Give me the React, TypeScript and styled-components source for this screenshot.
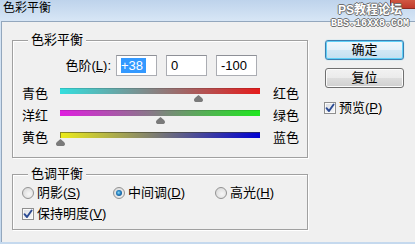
import React from 'react';
import styled, { createGlobalStyle, css } from 'styled-components';

const GlobalStyle = createGlobalStyle`
  html, body { margin: 0; padding: 0; }
  body {
    width: 415px; height: 244px; overflow: hidden;
    font-family: "Liberation Sans", "Noto Sans CJK SC", sans-serif;
    font-size: 13px; color: #000;
    background: #c9dcf0;
  }
`;

const Window = styled.div`
  position: relative;
  width: 415px; height: 244px;
  display: flex; flex-direction: column;
  overflow: hidden;
  background: linear-gradient(180deg, #bed3eb 0px, #d6e5f5 20px, #c5d9ee 100%);
`;

const TitleBar = styled.div`
  flex: none;
  height: 21px;
  box-sizing: border-box;
  padding: 1px 0 0 3px;
  font-size: 12px;
  line-height: 14px;
`;

const Watermark = styled.div`
  position: absolute;
  top: 3px; right: 6px;
  display: flex; flex-direction: column; align-items: flex-end;
  color: #fff;
  text-shadow: 1px 0 #6d6d6d, -1px 0 #6d6d6d, 0 1px #6d6d6d, 0 -1px #6d6d6d;
  pointer-events: none;
`;

const MarkTitle = styled.span`
  font-size: 12px; line-height: 15px; font-weight: bold; margin-right: 7px;
`;

const MarkUrl = styled.span`
  font-family: "Liberation Mono", monospace;
  font-size: 10px; line-height: 11px; font-weight: bold;
`;

const CloseButton = styled.div`
  position: absolute;
  top: -12px; right: -10px;
  width: 33px; height: 19px;
  border: 1px solid #8b2b22;
  border-radius: 0 0 4px 4px;
  background: linear-gradient(180deg, #e8a090 0%, #d25a44 55%, #c0392b 100%);
`;

const Body = styled.div`
  flex: none;
  height: 221px;
  margin-left: 1px;
  box-sizing: border-box;
  background: #f0f0f0;
  border-top: 1px solid #93a7bd;
  border-left: 1px solid #93a7bd;
  padding: 11px 0 0 10px;
  display: flex;
  align-items: flex-start;
  gap: 17px;
`;

const LeftCol = styled.div`
  flex: none;
  width: 296px;
  display: flex; flex-direction: column;
`;

const Group = styled.fieldset<{ $gap?: number }>`
  margin: ${p => p.$gap ?? 0}px 0 0 0;
  padding: 0 9px ${p => (p.$gap ? 7 : 5)}px 9px;
  min-width: 0;
  width: 296px;
  box-sizing: border-box;
  border: 1px solid #a0a0a0;
  box-shadow: inset 1px 1px 0 #fff, 1px 1px 0 #fff;
`;

const Legend = styled.legend`
  margin-left: 6px;
  padding: 0 3px;
  font-size: 13px;
  line-height: 14px;
  background: #f0f0f0;
`;

const LevelRow = styled.div`
  display: flex; align-items: center;
  margin-top: 8px;
  height: 21px;
`;

const LevelLabel = styled.span`
  flex: none;
  width: 89px; margin-right: 5px;
  text-align: right; line-height: 16px;
`;

const NumField = styled.div`
  flex: none;
  width: 41px; height: 21px;
  box-sizing: border-box;
  margin-right: 9px;
  border: 1px solid #abadb3;
  border-top-color: #8e9097;
  background: #fff;
  padding-left: 4px;
  line-height: 19px;
  font-size: 13px;
`;

const Selected = styled.span`
  background: #3399ff; color: #fff;
  padding: 0 3px 0 0;
`;

const Sliders = styled.div`
  margin-top: 10px;
  display: flex; flex-direction: column;
`;

const SliderRow = styled.div`
  display: flex; align-items: flex-start;
  height: 22px;
`;

const SideLabel = styled.span<{ $right?: boolean }>`
  flex: none;
  width: 38px;
  line-height: 16px;
  white-space: nowrap;
  ${p => p.$right && css`margin-left: 13px; width: auto;`}
`;

const Track = styled.div<{ $from: string; $to: string; $focus?: boolean }>`
  position: relative;
  flex: none;
  width: 200px; height: 6px;
  margin-top: 2px;
  background: linear-gradient(90deg, ${p => p.$from}, ${p => p.$to});
  box-shadow: inset 0 1px 0 rgba(0,0,0,0.12);
  ${p => p.$focus && css`box-shadow: inset 1px 1px 0 rgba(60,60,40,0.55);`}
`;

const Thumb = styled.svg`
  position: absolute;
  top: 7px;
  width: 9px; height: 7px;
  margin-left: -4.5px;
  overflow: visible;
`;

const RadioRow = styled.div`
  margin-top: 4px;
  display: grid;
  grid-template-columns: 91px 102px auto;
  height: 16px;
`;

const Option = styled.label`
  display: flex; align-items: center; gap: 3px;
  line-height: 16px;
  white-space: nowrap;
`;

const Radio = styled.span<{ $on?: boolean }>`
  position: relative;
  flex: none;
  width: 12px; height: 12px;
  box-sizing: border-box;
  border-radius: 50%;
  border: 1px solid #929292;
  background: radial-gradient(circle at 60% 60%, #f7f7f7 0%, #dedede 70%, #cfcfcf 100%);
  ${p => p.$on && css`
    &::after {
      content: "";
      position: absolute;
      left: 2px; top: 2px;
      width: 6px; height: 6px;
      border-radius: 50%;
      background: radial-gradient(circle at 45% 45%, #8fdcf6 0%, #2a86c4 40%, #0f4f8c 80%);
    }
  `}
`;

const CheckRow = styled.div`
  margin-top: 5px;
  height: 16px;
  display: flex;
`;

const Box = styled.span`
  flex: none;
  width: 12px; height: 12px;
  box-sizing: border-box;
  border: 1px solid #8f8f8f;
  background: linear-gradient(135deg, #dadde2 0%, #f6f7f9 100%);
  box-shadow: inset 0 0 0 1px #fafafa;
  display: flex; align-items: center; justify-content: center;
`;

const RightCol = styled.div`
  flex: none;
  padding-top: 7px;
  display: flex; flex-direction: column;
`;

const Button = styled.button<{ $default?: boolean }>`
  width: 79px; height: 20px;
  box-sizing: border-box;
  margin: 0 0 8px 0;
  padding: 0;
  font: 13px/18px "Liberation Sans", "Noto Sans CJK SC", sans-serif;
  color: #000;
  border: 1px solid #707070;
  border-radius: 3px;
  background: linear-gradient(180deg, #f2f2f2 0%, #ebebeb 48%, #dddddd 52%, #cfcfcf 100%);
  box-shadow: inset 0 0 0 1px #fbfbfb;
  ${p => p.$default && css`
    border-color: #3c7fb1;
    background: linear-gradient(180deg, #f1f8fc 0%, #e4f1f9 48%, #d2e8f5 52%, #c3e0f1 100%);
    box-shadow: inset 0 0 0 1px #5fd0f7, 0 0 1px #5fc6ef;
  `}
`;

const PreviewRow = styled.div`
  margin-top: 4px;
  margin-left: -1px;
  height: 16px;
  display: flex;
`;

function Check() {
  return (
    <svg width="10" height="10" viewBox="0 0 10 10">
      <path d="M1.5 5.2 L4 8 L8.6 1.5" fill="none" stroke="#2a4a93" strokeWidth="1.9" strokeLinecap="round" strokeLinejoin="round" />
    </svg>
  );
}

const sliders = [
  { left: '青色', right: '红色', from: '#33dede', to: '#e51c1c', value: 38 },
  { left: '洋红', right: '绿色', from: '#e01de0', to: '#1fe81f', value: 0 },
  { left: '黄色', right: '蓝色', from: '#ecec1a', to: '#0000d2', value: -100, focus: true },
];

export default function App() {
  return (
    <>
      <GlobalStyle />
      <Window>
        <TitleBar>色彩平衡</TitleBar>
        <CloseButton />
        <Watermark>
          <MarkTitle>PS教程论坛</MarkTitle>
          <MarkUrl>BBS.16XX8.COM</MarkUrl>
        </Watermark>
        <Body>
          <LeftCol>
            <Group>
              <Legend>色彩平衡</Legend>
              <LevelRow>
                <LevelLabel>色阶(<u>L</u>):</LevelLabel>
                <NumField><Selected>+38</Selected></NumField>
                <NumField>0</NumField>
                <NumField>-100</NumField>
              </LevelRow>
              <Sliders>
                {sliders.map(s => (
                  <SliderRow key={s.left}>
                    <SideLabel>{s.left}</SideLabel>
                    <Track $from={s.from} $to={s.to} $focus={s.focus}>
                      <Thumb viewBox="0 0 9 7" style={{ left: `${(s.value + 100) / 2}%` }}>
                        <path d="M4.5 0 C5.8 1.4 9 3 9 5 C9 6.4 8 7 6.6 7 L2.4 7 C1 7 0 6.4 0 5 C0 3 3.2 1.4 4.5 0 Z" fill="#7a7a7a" />
                      </Thumb>
                    </Track>
                    <SideLabel $right>{s.right}</SideLabel>
                  </SliderRow>
                ))}
              </Sliders>
            </Group>
            <Group $gap={9}>
              <Legend>色调平衡</Legend>
              <RadioRow>
                <Option><Radio /><span>阴影(<u>S</u>)</span></Option>
                <Option><Radio $on /><span>中间调(<u>D</u>)</span></Option>
                <Option><Radio /><span>高光(<u>H</u>)</span></Option>
              </RadioRow>
              <CheckRow>
                <Option><Box><Check /></Box><span>保持明度(<u>V</u>)</span></Option>
              </CheckRow>
            </Group>
          </LeftCol>
          <RightCol>
            <Button $default>确定</Button>
            <Button>复位</Button>
            <PreviewRow>
              <Option><Box><Check /></Box><span>预览(<u>P</u>)</span></Option>
            </PreviewRow>
          </RightCol>
        </Body>
      </Window>
    </>
  );
}
